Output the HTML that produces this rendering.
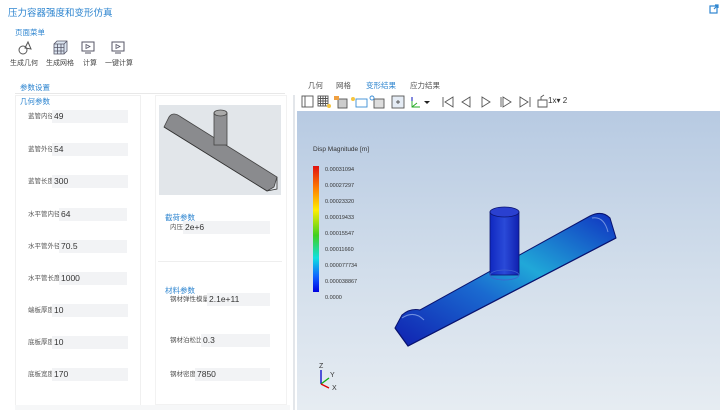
<!DOCTYPE html>
<html><head><meta charset="utf-8"><style>
*{margin:0;padding:0;box-sizing:border-box}
body{width:720px;height:420px;background:#fff;font-family:"Liberation Sans","Noto Sans CJK SC",sans-serif;position:relative;overflow:hidden;color:#333}
.a{position:absolute;white-space:nowrap}
.blue{color:#2f86d0}
.lbl{font-size:6.5px;color:#555;line-height:13px}
.inp{position:absolute;height:13px;background:#f2f3f5;font-size:8.5px;line-height:13px;padding-left:2px;color:#333}
.ic{position:absolute}
</style></head><body>
<div class="a blue" style="left:8px;top:5px;font-size:9.5px">压力容器强度和变形仿真</div>
<svg class="ic" style="left:709px;top:4px" width="10" height="10" viewBox="0 0 10 10"><rect x="1" y="2" width="7" height="7" fill="none" stroke="#2f86d0" stroke-width="1.2"/><path d="M5 5L9 1M6 1h3v3" stroke="#2f86d0" stroke-width="1.2" fill="none"/></svg>
<div class="a blue" style="left:15px;top:27px;font-size:7.5px">页面菜单</div>
<svg class="ic" style="left:17px;top:40px" width="16" height="16" viewBox="0 0 16 16"><circle cx="6" cy="10" r="4" fill="none" stroke="#555"/><path d="M8 8L11 2L14 9Z" fill="none" stroke="#555"/></svg>
<svg class="ic" style="left:52px;top:39px" width="17" height="17" viewBox="0 0 17 17"><path d="M2 5h10v10H2zM2 5l3-3h10v10l-3 3M12 5l3-3M5.5 5v10M9 5v10M2 8.5h10M2 12h10" fill="#dde6f2" stroke="#556" stroke-width=".8"/></svg>
<svg class="ic" style="left:81px;top:41px" width="14" height="14" viewBox="0 0 14 14"><rect x="1" y="1" width="12" height="9" fill="none" stroke="#556"/><path d="M5 3.5l4 2-4 2z" fill="none" stroke="#556" stroke-width=".8"/><path d="M4 12h6" stroke="#556"/></svg>
<svg class="ic" style="left:111px;top:41px" width="14" height="14" viewBox="0 0 14 14"><rect x="1" y="1" width="12" height="9" fill="none" stroke="#556"/><path d="M5 3.5l4 2-4 2z" fill="none" stroke="#556" stroke-width=".8"/><path d="M4 12h6" stroke="#556"/></svg>
<div class="a" style="left:10px;top:58px;font-size:7px;color:#444">生成几何</div>
<div class="a" style="left:46px;top:58px;font-size:7px;color:#444">生成网格</div>
<div class="a" style="left:83px;top:58px;font-size:7px;color:#444">计算</div>
<div class="a" style="left:105px;top:58px;font-size:7px;color:#444">一键计算</div>

<div class="a blue" style="left:20px;top:82px;font-size:7.5px">参数设置</div>
<div class="a" style="left:15px;top:93px;width:270px;height:1px;background:#e8e8e8"></div>
<div class="a" style="left:15px;top:95px;width:126px;height:310px;border:1px solid #f0f0f0;border-bottom:none"></div>
<div class="a" style="left:155px;top:95px;width:132px;height:310px;border:1px solid #f2f2f2"></div>
<div class="a" style="left:15px;top:405px;width:275px;height:5px;background:#f6f7f8"></div>
<div class="a blue" style="left:20px;top:96px;font-size:7.5px">几何参数</div>

<div class="a lbl" style="left:28px;top:110px">蓝管内径</div><div class="inp" style="left:52px;top:110px;width:76px">49</div>
<div class="a lbl" style="left:28px;top:143px">蓝管外径</div><div class="inp" style="left:52px;top:143px;width:76px">54</div>
<div class="a lbl" style="left:28px;top:175px">蓝管长度</div><div class="inp" style="left:52px;top:175px;width:76px">300</div>
<div class="a lbl" style="left:28px;top:208px">水平管内径</div><div class="inp" style="left:59px;top:208px;width:68px">64</div>
<div class="a lbl" style="left:28px;top:240px">水平管外径</div><div class="inp" style="left:59px;top:240px;width:68px">70.5</div>
<div class="a lbl" style="left:28px;top:272px">水平管长度</div><div class="inp" style="left:59px;top:272px;width:68px">1000</div>
<div class="a lbl" style="left:28px;top:304px">端板厚度</div><div class="inp" style="left:52px;top:304px;width:76px">10</div>
<div class="a lbl" style="left:28px;top:336px">底板厚度</div><div class="inp" style="left:52px;top:336px;width:76px">10</div>
<div class="a lbl" style="left:28px;top:368px">底板宽度</div><div class="inp" style="left:52px;top:368px;width:76px">170</div>

<svg class="ic" style="left:159px;top:105px" width="122" height="90" viewBox="0 0 122 90"><rect width="122" height="90" fill="#e2e6ea"/>
<path d="M5 22L10 12Q14 6 22 12L118 72L115 82L108 86Z" fill="#8a8b8e" stroke="#444" stroke-width=".8"/>
<path d="M5 22L108 86L118 84L118 72" fill="none" stroke="#333" stroke-width=".8"/>
<rect x="55" y="8" width="13" height="32" fill="#8f9093" stroke="#444" stroke-width=".8"/>
<ellipse cx="61.5" cy="8" rx="6.5" ry="3" fill="#aaa" stroke="#444" stroke-width=".8"/></svg>

<div class="a blue" style="left:165px;top:212px;font-size:7.5px">截荷参数</div>
<div class="a lbl" style="left:170px;top:221px">内压</div><div class="inp" style="left:183px;top:221px;width:87px">2e+6</div>
<div class="a" style="left:158px;top:261px;width:124px;height:1px;background:#eee"></div>
<div class="a blue" style="left:165px;top:285px;font-size:7.5px">材料参数</div>
<div class="a lbl" style="left:170px;top:293px">钢材弹性模量</div><div class="inp" style="left:207px;top:293px;width:63px">2.1e+11</div>
<div class="a lbl" style="left:170px;top:334px">钢材泊松比</div><div class="inp" style="left:201px;top:334px;width:69px">0.3</div>
<div class="a lbl" style="left:170px;top:368px">钢材密度</div><div class="inp" style="left:195px;top:368px;width:75px">7850</div>
<div class="a" style="left:293px;top:95px;width:2px;height:315px;background:#e3e6ea"></div>

<div class="a" style="left:308px;top:80px;font-size:7.5px;color:#555">几何</div>
<div class="a" style="left:336px;top:80px;font-size:7.5px;color:#555">网格</div>
<div class="a blue" style="left:366px;top:80px;font-size:7.5px">变形结果</div>
<div class="a" style="left:410px;top:80px;font-size:7.5px;color:#555">应力结果</div>
<svg class="ic" style="left:300px;top:94px" width="280" height="16" viewBox="0 0 280 16" fill="none" stroke="#555" stroke-width=".9">
<rect x="2" y="2" width="11" height="11"/><path d="M5 2v11"/>
<rect x="18" y="2" width="10" height="10"/><path d="M20.5 2v10M23 2v10M25.5 2v10M18 4.5h10M18 7h10M18 9.5h10"/><circle cx="29" cy="12" r="2" fill="#f5c540" stroke="none"/>
<rect x="38" y="5" width="9" height="9" fill="#ccc"/><rect x="34" y="2" width="5" height="4" fill="#f0a040" stroke="none"/>
<rect x="56" y="5" width="11" height="8" stroke="#3a8dd6"/><circle cx="53" cy="5" r="2" fill="#f5c540" stroke="none"/>
<rect x="74" y="5" width="10" height="9" fill="#ddd"/><circle cx="72" cy="4" r="2" fill="none" stroke="#3a8dd6"/>
<rect x="92" y="2" width="12" height="12" fill="#e5ecf5"/><path d="M96 8h4M98 6v4"/>
<path d="M112 3v10h8M112 13l5-4" stroke="#2a2"/><path d="M112 3v4" stroke="#00c"/><path d="M124 7l3 3 3-3z" fill="#222" stroke="none"/>
<path d="M143 3v10M153 3l-8 5 8 5z"/><path d="M170 3l-8 5 8 5z"/><path d="M182 3l8 5-8 5z"/>
<path d="M201 3v10M203 3l8 5-8 5z"/><path d="M220 3l8 5-8 5zM230 3v10"/>
<path d="M238 6h9v7h-9zM241 6V3l3-2"/></svg>
<div class="a" style="left:548px;top:96px;font-size:8px;color:#333">1x▾ 2</div>

<div class="a" style="left:297px;top:111px;width:423px;height:299px;background:linear-gradient(#b7cae2,#d5e0ec 60%,#e6ecf2)"></div>
<div class="a" style="left:313px;top:146px;font-size:6.5px;color:#333">Disp Magnitude [m]</div>
<div class="a" style="left:313px;top:166px;width:6px;height:126px;background:linear-gradient(#e01010,#ff8000 18%,#ffee00 35%,#40d020 55%,#10e0e0 73%,#1060ff 88%,#0000e0)"></div>
<div class="a" style="left:325px;top:162px;font-size:5.5px;line-height:16px;color:#333">0.00031094<br>0.00027297<br>0.00023320<br>0.00019433<br>0.00015547<br>0.00011660<br>0.000077734<br>0.000038867<br>0.0000</div>
<svg class="ic" style="left:313px;top:362px" width="30" height="28" viewBox="0 0 30 28"><path d="M8 8v14" stroke="#00c" stroke-width="1.3"/><path d="M8 22l8-6" stroke="#1a1" stroke-width="1.3"/><path d="M8 22l8 4" stroke="#d00" stroke-width="1.3"/><text x="6" y="6" font-size="7" fill="#333" font-family="Liberation Sans">Z</text><text x="17" y="15" font-size="7" fill="#333" font-family="Liberation Sans">Y</text><text x="19" y="28" font-size="7" fill="#333" font-family="Liberation Sans">X</text></svg>

<svg class="ic" style="left:380px;top:200px" width="280" height="150" viewBox="0 0 280 150">
<defs><linearGradient id="g" x1="0" y1="1" x2="1" y2="0"><stop offset="0" stop-color="#1020b0"/><stop offset=".4" stop-color="#1a6ad0"/><stop offset=".6" stop-color="#20a8d8"/><stop offset="1" stop-color="#1030c0"/></linearGradient>
<linearGradient id="c" x1="0" x2="1"><stop offset="0" stop-color="#1028c0"/><stop offset=".5" stop-color="#2a4ad8"/><stop offset="1" stop-color="#1020b0"/></linearGradient></defs>
<path d="M15 128L22 115Q30 108 40 110L210 16Q222 10 230 18L236 38L28 146Z" fill="url(#g)" stroke="#0a1470" stroke-width="1"/>
<path d="M15 128L28 146L236 38" fill="none" stroke="#0a1470" stroke-width="1.2"/>
<path d="M22 118Q34 110 44 120M212 18Q224 16 228 32" fill="none" stroke="#7090e0" stroke-width="1"/>
<rect x="110" y="12" width="29" height="63" fill="url(#c)" stroke="#0a1470" stroke-width=".8"/>
<ellipse cx="124.5" cy="75" rx="14.5" ry="5" fill="none" stroke="#4060d0" stroke-width=".8"/>
<ellipse cx="124.5" cy="12" rx="14.5" ry="5" fill="#2a40d0" stroke="#0a1470" stroke-width=".8"/>
</svg>
</body></html>
